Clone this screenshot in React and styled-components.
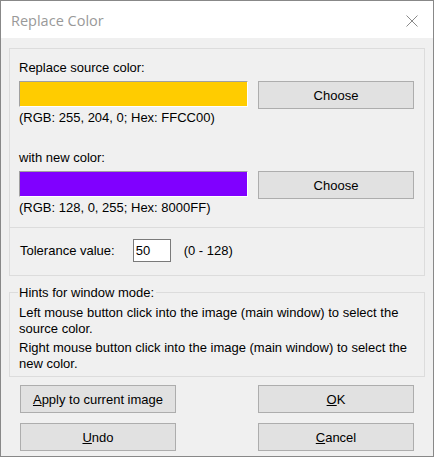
import { styled, createGlobalStyle } from "styled-components";

const GlobalStyle = createGlobalStyle`
  html, body {
    margin: 0;
    padding: 0;
    background: #ffffff;
  }
  * {
    box-sizing: border-box;
  }
`;

const Underline = ({ children }) => <u>{children}</u>;

const ColorBlock = ({ label, color, info, first }) => (
  <Block $first={first}>
    <Label>{label}</Label>
    <SwatchRow>
      <Swatch $color={color} />
      <Button type="button">Choose</Button>
    </SwatchRow>
    <Info>{info}</Info>
  </Block>
);

const App = () => {
  return (
    <>
      <GlobalStyle />
      <Window>
        <TitleBar>
          <Title>Replace Color</Title>
          <CloseIcon width="12" height="12" viewBox="0 0 12 12">
            <path d="M0.5 0.5 L11.5 11.5 M11.5 0.5 L0.5 11.5" stroke="#8a8a8a" strokeWidth="1" fill="none" />
          </CloseIcon>
        </TitleBar>
        <Body>
          <Panel>
            <ColorSection>
              <ColorBlock
                first
                label="Replace source color:"
                color="#ffcc00"
                info="(RGB: 255, 204, 0; Hex: FFCC00)"
              />
              <ColorBlock
                label="with new color:"
                color="#8000ff"
                info="(RGB: 128, 0, 255; Hex: 8000FF)"
              />
            </ColorSection>
            <ToleranceSection>
              <Label>Tolerance value:</Label>
              <ValueInput defaultValue="50" />
              <Range>(0 - 128)</Range>
            </ToleranceSection>
          </Panel>
          <Hints>
            <Legend>Hints for window mode:</Legend>
            <Hint>Left mouse button click into the image (main window) to select the source color.</Hint>
            <Hint>Right mouse button click into the image (main window) to select the new color.</Hint>
          </Hints>
          <Actions>
            <Button type="button"><Underline>A</Underline>pply to current image</Button>
            <Button type="button"><Underline>O</Underline>K</Button>
            <Button type="button"><Underline>U</Underline>ndo</Button>
            <Button type="button"><Underline>C</Underline>ancel</Button>
          </Actions>
        </Body>
      </Window>
    </>
  );
};

export default App;

const Window = styled.div`
  width: 434px;
  height: 457px;
  border: 1px solid #888888;
  display: flex;
  flex-direction: column;
  background: #f0f0f0;
  font-family: "Liberation Sans", Arial, sans-serif;
  font-size: 13px;
  color: #000;
`;

const TitleBar = styled.div`
  height: 37px;
  background: #ffffff;
  display: flex;
  align-items: center;
  justify-content: space-between;
  padding: 0 15px 0 10px;
  flex-shrink: 0;
`;

const Title = styled.div`
  font-family: "Open Sans", "Noto Sans", sans-serif;
  font-size: 14.5px;
  color: #999999;
  padding-top: 2px;
`;

const CloseIcon = styled.svg`
  display: block;
  margin-top: 2px;
`;

const Body = styled.div`
  flex: 1;
  padding: 10px 8px 0 8px;
  display: flex;
  flex-direction: column;
`;

const Panel = styled.div`
  border: 1px solid #dcdcdc;
`;

const ColorSection = styled.div`
  padding: 11px 10px 12px 9px;
`;

const Block = styled.div`
  margin-top: ${(p) => (p.$first ? "0" : "25px")};
`;

const Label = styled.div`
  line-height: 15px;
  white-space: nowrap;
`;

const SwatchRow = styled.div`
  display: flex;
  align-items: flex-start;
  gap: 10px;
  margin-top: 6px;
`;

const Swatch = styled.div`
  width: 229px;
  height: 26px;
  background: ${(p) => p.$color};
  border-top: 1px solid #a0a0a0;
  border-left: 1px solid #a0a0a0;
  border-bottom: 1px solid #ffffff;
  border-right: 1px solid #ffffff;
`;

const Info = styled.div`
  line-height: 15px;
  margin-top: 1px;
`;

const ToleranceSection = styled.div`
  border-top: 1px solid #dcdcdc;
  display: flex;
  align-items: center;
  padding: 11px 10px 13px 10px;
`;

const ValueInput = styled.input`
  width: 38px;
  height: 23px;
  margin-left: 18px;
  border: 1px solid #7a7a7a;
  background: #fff;
  font-family: "Liberation Sans", Arial, sans-serif;
  font-size: 13px;
  padding: 0 2px;
  outline: none;
`;

const Range = styled.span`
  margin-left: 13px;
`;

const Hints = styled.fieldset`
  margin: 10px 0 0 0;
  padding: 0 10px 4px 9px;
  border: 1px solid #dcdcdc;
`;

const Legend = styled.legend`
  padding: 0 2px 0 1px;
  margin-left: -1px;
  line-height: 13px;
`;

const Hint = styled.p`
  margin: 6px 0 0 0;
  line-height: 16px;
  & + & {
    margin-top: 3px;
  }
`;

const Actions = styled.div`
  display: grid;
  grid-template-columns: 156px 156px;
  justify-content: space-between;
  row-gap: 10px;
  padding: 8px 11px 0 11px;
`;

const Button = styled.button`
  width: 156px;
  height: 28px;
  background: #e1e1e1;
  border: 1px solid #adadad;
  border-radius: 0;
  font-family: "Liberation Sans", Arial, sans-serif;
  font-size: 13px;
  color: #000;
  padding: 0;
  cursor: pointer;
  flex-shrink: 0;

  &:hover {
    background: #e5f1fb;
    border-color: #0078d7;
  }
`;
